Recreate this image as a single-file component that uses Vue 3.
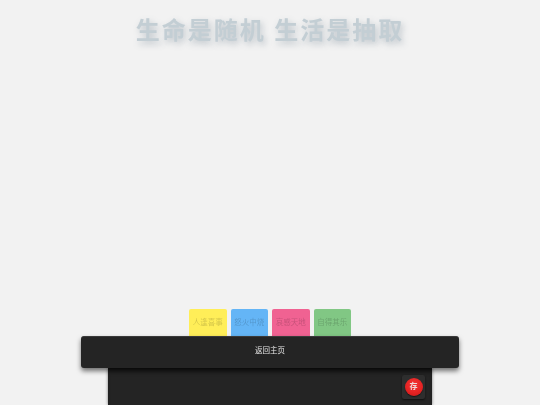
<template>
  <div class="page">
    <h1 class="title">生命是随机 生活是抽取</h1>
    <div class="moods">
      <div v-for="mood in moods" :key="mood.text" class="mood" :class="mood.color">{{ mood.text }}</div>
    </div>
    <div class="bar">返回主页</div>
    <div class="machine">
      <div class="save-tile">
        <button class="save-btn">存</button>
      </div>
    </div>
  </div>
</template>

<script setup>
const moods = [
  { text: '人逢喜事', color: 'yellow' },
  { text: '怒火中烧', color: 'blue' },
  { text: '哀感天地', color: 'pink' },
  { text: '自得其乐', color: 'green' }
]
</script>

<style>
html, body {
  margin: 0;
  background: #f2f2f2;
}
</style>

<style scoped>
.page {
  height: 405px;
  overflow: hidden;
  display: flex;
  flex-direction: column;
  align-items: center;
  background: #f2f2f2;
  font-family: "Liberation Sans", "Noto Sans CJK SC", sans-serif;
  filter: blur(0.3px);
}

.title {
  margin: 16px 0 0;
  font-size: 24px;
  line-height: 30px;
  font-weight: 700;
  letter-spacing: 2px;
  color: #c3ced4;
  text-shadow: 2px 3px 6px rgba(90, 110, 125, 0.35);
}

.moods {
  margin-top: auto;
  display: flex;
  gap: 4px;
}

.mood {
  width: 37.5px;
  height: 27px;
  line-height: 27px;
  text-align: center;
  font-size: 7.5px;
  border-radius: 2px 2px 0 0;
  white-space: nowrap;
  color: rgba(0, 0, 0, 0.18);
}

.yellow { background: #ffee58; }
.blue { background: #64b5f6; }
.pink { background: #f06292; }
.green { background: #81c784; }

.bar {
  width: 378px;
  height: 32px;
  flex-shrink: 0;
  border-radius: 3px;
  background: #242424;
  color: #e6e6e6;
  font-size: 7.5px;
  line-height: 28px;
  text-align: center;
  box-shadow: 0 3px 5px rgba(0, 0, 0, 0.55);
  border-top: 1px solid #3a3a3a;
  box-sizing: border-box;
  position: relative;
  z-index: 1;
}

.machine {
  width: 324px;
  height: 37px;
  flex-shrink: 0;
  box-sizing: border-box;
  padding: 7px 7px 0 0;
  display: flex;
  justify-content: flex-end;
  align-items: flex-start;
  background: #242424;
  box-shadow: 0 0 3px rgba(0, 0, 0, 0.5), inset 0 4px 4px -2px rgba(0, 0, 0, 0.5);
}

.save-tile {
  width: 23px;
  height: 24px;
  display: flex;
  align-items: center;
  justify-content: center;
  border-radius: 2px;
  background: #2e2e2e;
  box-shadow: 0 1px 2px rgba(0, 0, 0, 0.6);
}

.save-btn {
  width: 18px;
  height: 18px;
  padding: 0;
  border: none;
  border-radius: 50%;
  background: radial-gradient(circle at 50% 35%, #f43535 0%, #e42222 60%, #bb1717 100%);
  color: #f0d8d8;
  font-family: inherit;
  font-size: 8px;
  line-height: 18px;
  font-weight: 700;
  box-shadow: 0 1px 1px rgba(0, 0, 0, 0.5);
}
</style>
